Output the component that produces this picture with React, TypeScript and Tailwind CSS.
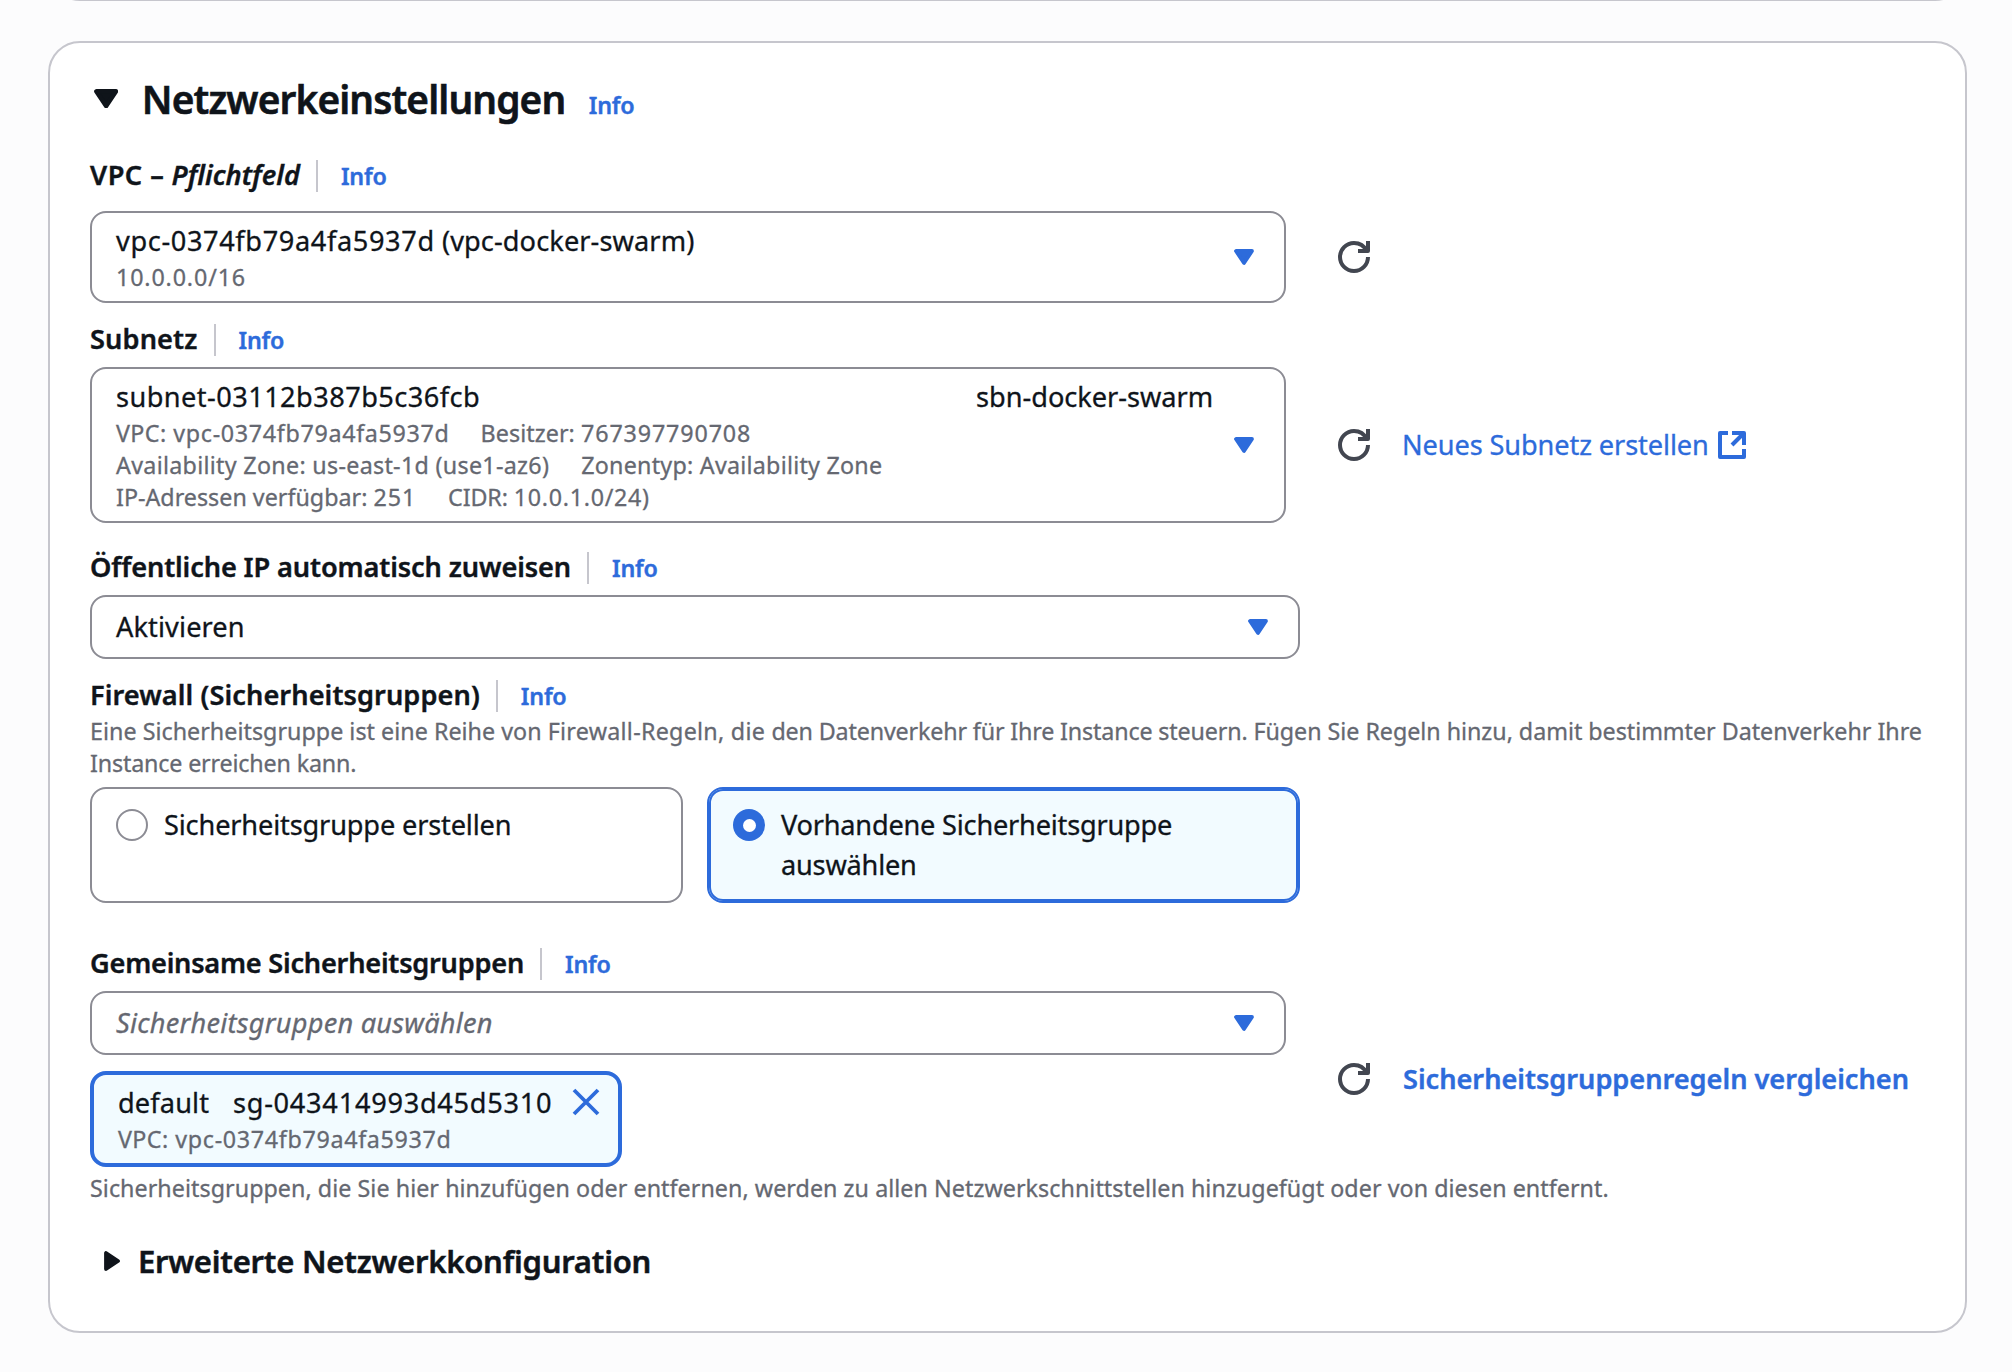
import React, { type ReactNode } from "react";

const H28 = "text-[27.16px] leading-[40px] whitespace-nowrap";
const S24 = "text-[23.28px] leading-[32px] whitespace-nowrap text-[#656871]";

function CaretDown({ className }: { className: string }) {
  return (
    <svg viewBox="3 4 10 8" className={className} fill="currentColor" stroke="currentColor" strokeWidth="1.9" strokeLinejoin="round">
      <path d="M4 5h8l-4 6z" />
    </svg>
  );
}

function CaretRight({ className }: { className: string }) {
  return (
    <svg viewBox="4 3 8 10" className={className} fill="currentColor" stroke="currentColor" strokeWidth="1.9" strokeLinejoin="round">
      <path d="M5 4v8l6-4z" />
    </svg>
  );
}

function RefreshButton() {
  return (
    <button type="button" className="ml-[52px] size-8 shrink-0 text-[#424650]">
      <svg viewBox="0 0 16 16" className="size-8" fill="none" stroke="currentColor" strokeWidth="2" strokeLinejoin="round">
        <path d="M15 8c0 3.87-3.13 7-7 7s-7-3.13-7-7 3.13-7 7-7c2.79 0 5.2 1.63 6.33 4" />
        <path d="M10 5h5V0" />
      </svg>
    </button>
  );
}

function ExternalIcon() {
  return (
    <svg viewBox="0 0 16 16" className="ml-[7px] size-8" fill="none" stroke="currentColor" strokeWidth="2" strokeLinejoin="round">
      <path d="M6 2H2v12h12v-4" />
      <path d="M8 2h6v6" />
      <path d="m14 2-6 6" />
    </svg>
  );
}

function InfoLink() {
  return (
    <a className="text-[23.28px] leading-[43px] font-semibold tracking-[-0.2px] text-[#2d6bdb] [-webkit-text-stroke:0.4px]">Info</a>
  );
}

function Label({ children, className }: { children: ReactNode; className: string }) {
  return (
    <div className="flex h-10">
      <span className={`${H28} mt-px font-semibold [-webkit-text-stroke:0.4px] ${className}`}>{children}</span>
      <span className="mt-1.5 mr-[23px] ml-4 h-8 w-0.5 bg-[#c6c6cd]" />
      <div className="mt-px">
        <InfoLink />
      </div>
    </div>
  );
}

function Select({ children, className }: { children: ReactNode; className: string }) {
  return (
    <div className={`flex items-center rounded-2xl border-2 border-[#8c8c94] bg-white pr-[30px] pl-6 ${className}`}>
      <div className="flex-1">{children}</div>
      <CaretDown className="h-4 w-5 shrink-0 text-[#2d6bdb]" />
    </div>
  );
}

export default function App() {
  return (
    <div className="flex h-[1372px] w-[2012px] flex-col overflow-hidden bg-[#fcfcfd] font-['Noto_Sans','Open_Sans',sans-serif] text-[#0f141a] [-webkit-text-stroke:0.3px]">
      <div className="flex h-px shrink-0 flex-col justify-end overflow-hidden">
        <div className="mr-[45px] ml-12 h-20 shrink-0 rounded-[32px] border-2 border-[#c6c6cd] bg-white" />
      </div>

      <section className="mt-10 mr-[45px] ml-12 flex h-[1292px] shrink-0 flex-col rounded-[32px] border-2 border-[#c6c6cd] bg-white pl-10">
        <header className="mt-8 flex h-12">
          <CaretDown className="mt-[14px] ml-1 h-[19.4px] w-[24.3px]" />
          <h2 className="ml-[23.5px] text-[38.8px] leading-[48px] font-semibold tracking-[-0.87px] [-webkit-text-stroke:0.6px]">
            Netzwerkeinstellungen
          </h2>
          <div className="mt-[9px] ml-[23.5px]">
            <InfoLink />
          </div>
        </header>

        <div className="mt-[31px]">
          <Label className="tracking-[0.13px]">
            <span className="tracking-[0.5px]">VPC –</span> <i className="tracking-[0.02px]">Pflichtfeld</i>
          </Label>
          <div className="mt-[17px] flex items-center">
            <Select className="h-[92px] w-[1196px]">
              <div className={`${H28} tracking-[0.1px]`}>
                <span className="tracking-[0.62px]">vpc-0374fb79a4fa5937d</span> (vpc-docker-swarm)
              </div>
              <div className={`${S24} tracking-[0.86px]`}>10.0.0.0/16</div>
            </Select>
            <RefreshButton />
          </div>
        </div>

        <div className="mt-[15px]">
          <Label className="tracking-[0.13px]">Subnetz</Label>
          <div className="mt-[9px] flex items-center">
            <Select className="h-[156px] w-[1196px]">
              <div className={`${H28} mr-[21px] flex justify-between`}>
                <span className="tracking-[0.44px]">subnet-03112b387b5c36fcb</span>
                <span className="tracking-[-0.03px]">sbn-docker-swarm</span>
              </div>
              <div className={`${S24} flex gap-[31px]`}>
                <span className="tracking-[0.68px]">
                  <span className="tracking-[0.4px]">VPC:</span> vpc-0374fb79a4fa5937d
                </span>
                <span className="tracking-[0.08px]">
                  Besitzer: <span className="tracking-[0.87px]">767397790708</span>
                </span>
              </div>
              <div className={`${S24} flex gap-8`}>
                <span className="tracking-[0.3px]">Availability Zone: us-east-1d (use1-az6)</span>
                <span className="tracking-[0.25px]">Zonentyp: Availability Zone</span>
              </div>
              <div className={`${S24} flex gap-8`}>
                <span className="tracking-[0.01px]">
                  IP-Adressen verfügbar: <span className="tracking-[0.9px]">251</span>
                </span>
                <span className="tracking-[-0.1px]">
                  CIDR: <span className="tracking-[0.7px]">10.0.1.0/24)</span>
                </span>
              </div>
            </Select>
            <RefreshButton />
            <a className="ml-8 flex items-center text-[#2d6bdb]">
              <span className={`${H28} tracking-[-0.1px]`}>Neues Subnetz erstellen</span>
              <ExternalIcon />
            </a>
          </div>
        </div>

        <div className="mt-[23px]">
          <Label className="tracking-[-0.118px]">Öffentliche IP automatisch zuweisen</Label>
          <Select className="mt-[9px] h-16 w-[1210px]">
            <div className={`${H28} tracking-[0.11px]`}>Aktivieren</div>
          </Select>
        </div>

        <div className="mt-[15px]">
          <Label className="tracking-[0.09px]">Firewall (Sicherheitsgruppen)</Label>
          <p className={`${S24} mt-px`}>
            <span className="tracking-[0.03px]">Eine Sicherheitsgruppe ist eine Reihe von </span>
            <span className="tracking-[0.28px]">Firewall-Regeln, die </span>
            <span className="tracking-[-0.15px]">den Datenverkehr für Ihre Instance steuern. </span>
            <span className="tracking-[-0.025px]">Fügen Sie Regeln hinzu, damit bestimmter Datenverkehr Ihre</span>
            <br />
            <span className="tracking-[-0.16px]">Instance erreichen kann.</span>
          </p>
          <div className="mt-2 grid h-[116px] w-[1210px] grid-cols-2 gap-6">
            <div className="flex rounded-2xl border-2 border-[#8c8c94] pt-4 pl-6">
              <span className="mt-1 size-8 rounded-full border-2 border-[#8c8c94] bg-white" />
              <span className={`${H28} ml-4 tracking-[-0.15px]`}>Sicherheitsgruppe erstellen</span>
            </div>
            <div className="flex rounded-2xl border-2 border-[#2d6bdb] bg-[#f2fbff] pt-4 pl-6 shadow-[inset_0_0_0_2px_#2d6bdb]">
              <span className="mt-1 flex size-8 items-center justify-center rounded-full bg-[#2d6bdb]">
                <span className="size-[13px] rounded-full bg-white" />
              </span>
              <span className={`${H28} ml-4 tracking-[-0.21px]`}>
                Vorhandene Sicherheitsgruppe
                <br />
                auswählen
              </span>
            </div>
          </div>
        </div>

        <div className="mt-[39px]">
          <Label className="tracking-[-0.233px]">Gemeinsame Sicherheitsgruppen</Label>
          <div className="mt-[9px] flex items-center">
            <div className="w-[1196px]">
              <Select className="h-16">
                <div className={`${H28} tracking-[0.237px] text-[#656871] italic`}>Sicherheitsgruppen auswählen</div>
              </Select>
              <div className="mt-4 flex h-24 w-[532px] rounded-2xl border-4 border-[#2d6bdb] bg-[#f2fbff] pt-2 pl-6">
                <div>
                  <div className={`${H28} flex`}>
                    <span className="w-[115px] tracking-[0.136px]">default</span>
                    <span className="w-[333px] tracking-[0.72px]">sg-043414993d45d5310</span>
                  </div>
                  <div className={`${S24} tracking-[0.68px]`}>
                    <span className="tracking-[0.4px]">VPC:</span> vpc-0374fb79a4fa5937d
                  </div>
                </div>
                <svg viewBox="0 0 32 32" className="mt-[3px] ml-1 size-8 text-[#2d6bdb]" fill="none" stroke="currentColor" strokeWidth="3.8">
                  <path d="m4 4 24 24M28 4 4 28" />
                </svg>
              </div>
            </div>
            <RefreshButton />
            <a className={`${H28} ml-[33px] font-semibold tracking-[-0.02px] text-[#2d6bdb] [-webkit-text-stroke:0.4px]`}>
              Sicherheitsgruppenregeln vergleichen
            </a>
          </div>
          <p className={`${S24} mt-[5px] tracking-[0.053px]`}>
            Sicherheitsgruppen, die Sie hier hinzufügen oder entfernen, werden zu allen Netzwerkschnittstellen hinzugefügt oder von diesen entfernt.
          </p>
        </div>

        <div className="mt-9 flex">
          <CaretRight className="mt-[10.5px] ml-[14px] h-[20px] w-4" />
          <h3 className="mt-px ml-[18px] text-[31.04px] leading-[40px] font-semibold tracking-[-0.23px] [-webkit-text-stroke:0.5px]">
            Erweiterte Netzwerkkonfiguration
          </h3>
        </div>
      </section>
    </div>
  );
}
